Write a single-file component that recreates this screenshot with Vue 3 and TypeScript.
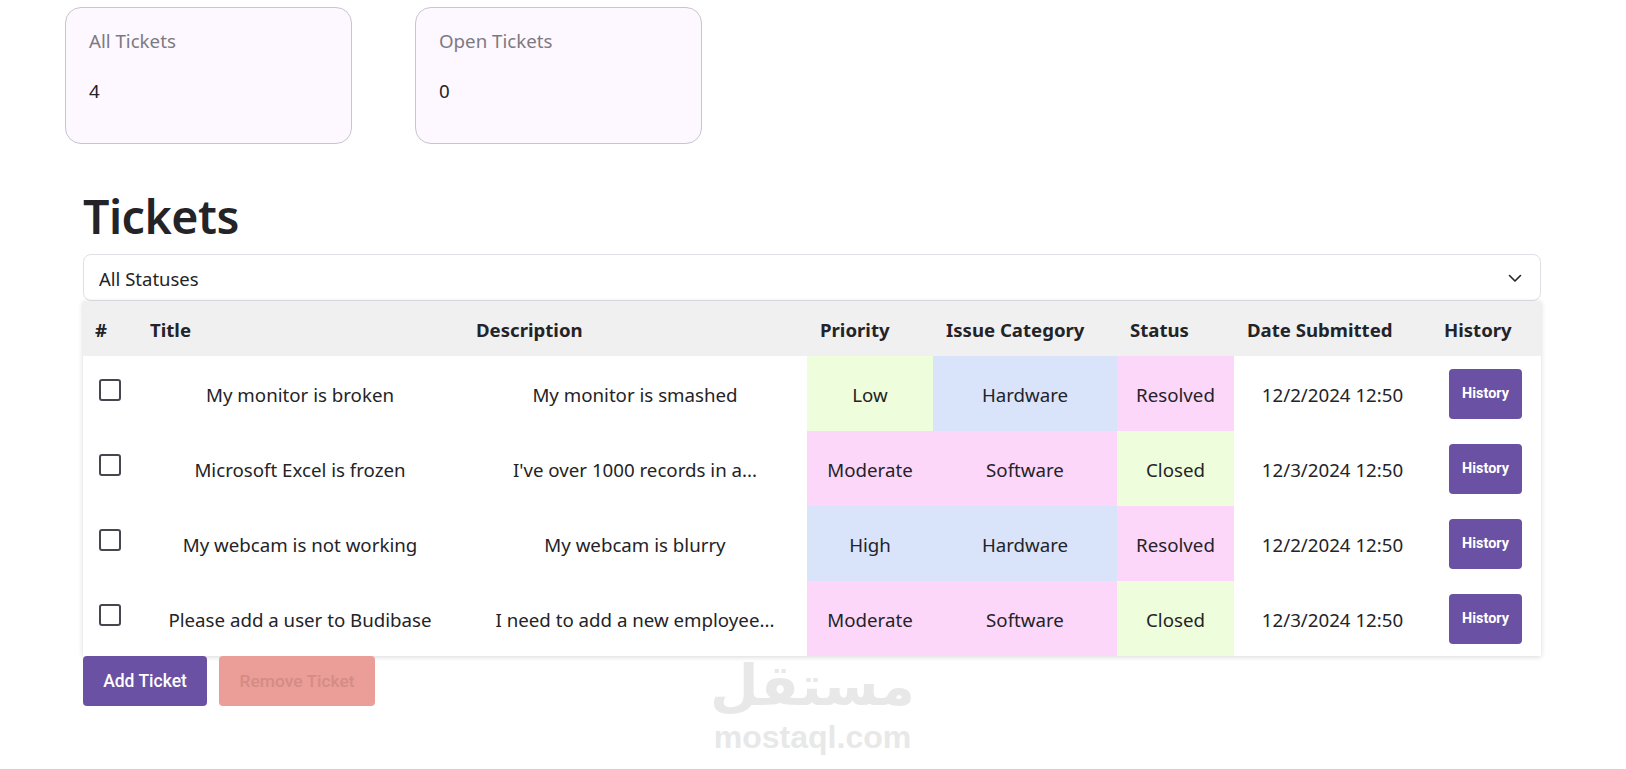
<script setup lang="ts">
interface Ticket {
  title: string
  description: string
  priority: string
  priorityTone: string
  category: string
  categoryTone: string
  status: string
  statusTone: string
  date: string
}

const cards = [
  { label: 'All Tickets', value: 4 },
  { label: 'Open Tickets', value: 0 },
]

const columns = ['#', 'Title', 'Description', 'Priority', 'Issue Category', 'Status', 'Date Submitted', 'History']

const tickets: Ticket[] = [
  { title: 'My monitor is broken', description: 'My monitor is smashed', priority: 'Low', priorityTone: 'green', category: 'Hardware', categoryTone: 'blue', status: 'Resolved', statusTone: 'pink', date: '12/2/2024 12:50' },
  { title: 'Microsoft Excel is frozen', description: "I've over 1000 records in a...", priority: 'Moderate', priorityTone: 'pink', category: 'Software', categoryTone: 'pink', status: 'Closed', statusTone: 'green', date: '12/3/2024 12:50' },
  { title: 'My webcam is not working', description: 'My webcam is blurry', priority: 'High', priorityTone: 'blue', category: 'Hardware', categoryTone: 'blue', status: 'Resolved', statusTone: 'pink', date: '12/2/2024 12:50' },
  { title: 'Please add a user to Budibase', description: 'I need to add a new employee...', priority: 'Moderate', priorityTone: 'pink', category: 'Software', categoryTone: 'pink', status: 'Closed', statusTone: 'green', date: '12/3/2024 12:50' },
]
</script>

<template>
  <div class="page">
    <section class="cards">
      <article v-for="card in cards" :key="card.label" class="card">
        <div class="card-label">{{ card.label }}</div>
        <div class="card-value">{{ card.value }}</div>
      </article>
    </section>

    <main class="content">
      <h1 class="title">Tickets</h1>
      <div class="select">
        <span>All Statuses</span>
        <svg class="chevron" width="16" height="16" viewBox="0 0 16 16" fill="none" stroke="currentColor" stroke-width="1.6" stroke-linecap="round" stroke-linejoin="round">
          <path d="M2.5 5.5 8 11l5.5-5.5" />
        </svg>
      </div>

      <table class="table">
        <colgroup>
          <col class="c1" /><col class="c2" /><col class="c3" /><col class="c4" />
          <col class="c5" /><col class="c6" /><col class="c7" /><col class="c8" />
        </colgroup>
        <thead>
          <tr>
            <th v-for="column in columns" :key="column">{{ column }}</th>
          </tr>
        </thead>
        <tbody>
          <tr v-for="ticket in tickets" :key="ticket.title">
            <td class="check-cell"><span class="checkbox"></span></td>
            <td>{{ ticket.title }}</td>
            <td>{{ ticket.description }}</td>
            <td :class="ticket.priorityTone">{{ ticket.priority }}</td>
            <td :class="ticket.categoryTone">{{ ticket.category }}</td>
            <td :class="ticket.statusTone">{{ ticket.status }}</td>
            <td>{{ ticket.date }}</td>
            <td class="history-cell"><button class="btn btn-history" type="button">History</button></td>
          </tr>
        </tbody>
      </table>

      <div class="actions">
        <button class="btn btn-add" type="button">Add Ticket</button>
        <button class="btn btn-remove" type="button">Remove Ticket</button>
      </div>
    </main>

    <div class="watermark">
      <div class="wm-ar" lang="ar" dir="rtl">مستقل</div>
      <div class="wm-en">mostaql.com</div>
    </div>
  </div>
</template>

<style>
html, body { margin: 0; background: #fff; }
</style>

<style scoped>
.page {
  position: relative;
  height: 769px;
  overflow: hidden;
  font-family: "Noto Sans", "Open Sans", sans-serif;
  color: #232328;
  box-sizing: border-box;
  padding-top: 7px;
}
.cards { display: flex; gap: 63px; padding-left: 65px; }
.card {
  width: 287px;
  height: 137px;
  box-sizing: border-box;
  border: 1px solid #cac4d0;
  border-radius: 16px;
  background: #fdf7ff;
  padding: 21px 23px;
  font-size: 18.7px;
}
.card-label { color: #7c7a80; line-height: 24px; }
.card-value { color: #232328; line-height: 24px; margin-top: 26px; }
.content { margin: 0 85px 0 83px; }
.title {
  margin: 39px 0 0;
  font-size: 46.5px;
  font-weight: 600;
  line-height: 66px;
  height: 71px;
  letter-spacing: -0.5px;
}
.select {
  height: 47px;
  box-sizing: border-box;
  border: 1px solid #dfdfe6;
  border-radius: 8px;
  padding: 1px 16px 0 15px;
  display: flex;
  align-items: center;
  justify-content: space-between;
  font-size: 18.5px;
}
.chevron { margin-right: 1px; }
.table {
  width: 1458px;
  table-layout: fixed;
  border-collapse: collapse;
  box-shadow: 0 1px 5px rgba(0, 0, 0, 0.16);
  font-size: 18.7px;
}
.c1 { width: 54px; }
.c2 { width: 326px; }
.c3 { width: 344px; }
.c4 { width: 126px; }
.c5 { width: 184px; }
.c6 { width: 117px; }
.c7 { width: 197px; }
.c8 { width: 110px; }
th {
  height: 55px;
  padding: 2px 12px 0 13px;
  box-sizing: border-box;
  background: #f0f0f0;
  text-align: left;
  font-weight: 700;
  font-size: 18.6px;
  white-space: nowrap;
}
th:first-child { padding-left: 12px; }
td {
  height: 75px;
  padding: 2px 0 0;
  box-sizing: border-box;
  text-align: center;
  white-space: nowrap;
}
.green { background: #eefddb; }
.blue { background: #d9e4fb; }
.pink { background: #fcd7fa; }
.check-cell { vertical-align: middle; padding: 0; }
.history-cell { padding: 0; }
.checkbox {
  display: block;
  width: 18px;
  height: 18px;
  margin: -7px auto 0 16px;
  border: 2px solid #49454f;
  border-radius: 3px;
}
.btn {
  font-family: Roboto, sans-serif;
  border: 0;
  border-radius: 4px;
  height: 50px;
  padding: 0;
  display: block;
  font-weight: 500;
}
.btn-history {
  width: 73px;
  margin: 0 0 0 18px;
  background: #6a51a3;
  color: #fff;
  font-size: 14.4px;
  font-weight: 700;
}
.actions { display: flex; gap: 12px; }
.btn-add { width: 124px; background: #6a51a3; color: #fff; font-size: 17.5px; }
.btn-remove { width: 156px; background: #ea9e97; color: #d48c86; font-size: 17.4px; }
.watermark {
  position: absolute;
  left: 690px;
  top: 656px;
  width: 245px;
  text-align: center;
  color: #e8e8e8;
  pointer-events: none;
}
.wm-ar { font-family: "DejaVu Sans", sans-serif; font-weight: 700; font-size: 56px; line-height: 60px; }
.wm-en { font-family: "Liberation Sans", sans-serif; font-weight: 700; font-size: 32px; line-height: 30px; margin-top: 6px; }
</style>
